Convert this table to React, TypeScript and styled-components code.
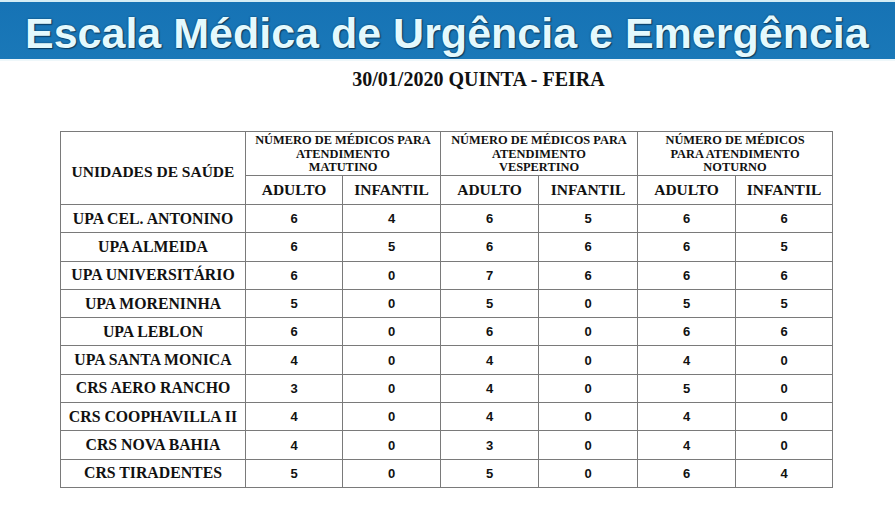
import React from 'react';
import styled, { createGlobalStyle } from 'styled-components';

type Row = { name: string; values: number[] };

const rows: Row[] = [
  { name: 'UPA CEL. ANTONINO', values: [6, 4, 6, 5, 6, 6] },
  { name: 'UPA ALMEIDA', values: [6, 5, 6, 6, 6, 5] },
  { name: 'UPA UNIVERSITÁRIO', values: [6, 0, 7, 6, 6, 6] },
  { name: 'UPA MORENINHA', values: [5, 0, 5, 0, 5, 5] },
  { name: 'UPA LEBLON', values: [6, 0, 6, 0, 6, 6] },
  { name: 'UPA SANTA MONICA', values: [4, 0, 4, 0, 4, 0] },
  { name: 'CRS AERO RANCHO', values: [3, 0, 4, 0, 5, 0] },
  { name: 'CRS COOPHAVILLA II', values: [4, 0, 4, 0, 4, 0] },
  { name: 'CRS NOVA BAHIA', values: [4, 0, 3, 0, 4, 0] },
  { name: 'CRS TIRADENTES', values: [5, 0, 5, 0, 6, 4] },
];

const groups = [
  ['NÚMERO DE MÉDICOS PARA', 'ATENDIMENTO', 'MATUTINO'],
  ['NÚMERO DE MÉDICOS PARA', 'ATENDIMENTO', 'VESPERTINO'],
  ['NÚMERO DE MÉDICOS', 'PARA ATENDIMENTO', 'NOTURNO'],
];

const colWidths = [185, 97, 98, 98, 99, 98, 97];

const App = () => {
  return (
    <Page>
      <GlobalStyle />
      <Banner>
        <Title>Escala Médica de Urgência e Emergência</Title>
      </Banner>
      <DateLine>30/01/2020 QUINTA - FEIRA</DateLine>
      <Schedule>
        <colgroup>
          {colWidths.map((w, i) => (
            <col key={i} style={{ width: w }} />
          ))}
        </colgroup>
        <thead>
          <GroupRow>
            <UnitHead rowSpan={2}>UNIDADES DE SAÚDE</UnitHead>
            {groups.map((lines, i) => (
              <GroupHead key={i} colSpan={2}>
                {lines.map((l, j) => (
                  <div key={j}>{l}</div>
                ))}
              </GroupHead>
            ))}
          </GroupRow>
          <SubRow>
            {groups.map((_, i) => (
              <React.Fragment key={i}>
                <SubHead>ADULTO</SubHead>
                <SubHead>INFANTIL</SubHead>
              </React.Fragment>
            ))}
          </SubRow>
        </thead>
        <tbody>
          {rows.map((r) => (
            <DataRow key={r.name}>
              <UnitName>{r.name}</UnitName>
              {r.values.map((v, i) => (
                <Count key={i}>{v}</Count>
              ))}
            </DataRow>
          ))}
        </tbody>
      </Schedule>
    </Page>
  );
};

export default App;

const GlobalStyle = createGlobalStyle`
  html, body {
    margin: 0;
    padding: 0;
    background: #ffffff;
  }
`;

const Page = styled.div`
  width: 895px;
  height: 507px;
  overflow: hidden;
  background: #ffffff;
`;

const Banner = styled.header`
  height: 57px;
  border-top: 2px solid #d4edf5;
  border-bottom: 2px solid #eef7fa;
  background: linear-gradient(#1673b5, #1a78b8);
  display: flex;
  align-items: center;
  padding-left: 25px;
`;

const Title = styled.h1`
  margin: 0;
  font-family: 'Liberation Sans', Arial, sans-serif;
  font-weight: 700;
  font-size: 43px;
  line-height: 1;
  color: #e4f9fd;
  white-space: nowrap;
  text-shadow: 0 0 2px #0c3b5e, 1px 1px 1px #0c3b5e;
  margin-top: 5px;
`;

const DateLine = styled.div`
  display: flex;
  justify-content: center;
  padding-left: 62px;
  margin-top: 7px;
  font-family: 'Liberation Serif', 'Times New Roman', serif;
  font-weight: 700;
  font-size: 20px;
  line-height: 22px;
  color: #111;
`;

const Schedule = styled.table`
  margin: 41px 0 0 60px;
  width: 772px;
  table-layout: fixed;
  border-collapse: collapse;
  border: 1px solid #7a7a7a;
  color: #111;

  td, th {
    border: 1px solid #7a7a7a;
    padding: 0;
    text-align: center;
    vertical-align: middle;
  }
`;

const GroupRow = styled.tr`
  height: 44px;
`;

const SubRow = styled.tr`
  height: 29px;
`;

const DataRow = styled.tr`
  height: 28.3px;
`;

const UnitHead = styled.th`
  font-family: 'Liberation Serif', 'Times New Roman', serif;
  font-weight: 700;
  font-size: 15.5px;
  padding-top: 8px !important;
`;

const GroupHead = styled.th`
  font-family: 'Liberation Serif', 'Times New Roman', serif;
  font-weight: 700;
  font-size: 12.4px;
  line-height: 13.5px;
  padding-top: 2px !important;
`;

const SubHead = styled.th`
  font-family: 'Liberation Serif', 'Times New Roman', serif;
  font-weight: 700;
  font-size: 15.5px;
`;

const UnitName = styled.td`
  font-family: 'Liberation Serif', 'Times New Roman', serif;
  font-weight: 700;
  font-size: 15.8px;
  white-space: nowrap;
`;

const Count = styled.td`
  font-family: 'Liberation Sans', Arial, sans-serif;
  font-weight: 700;
  font-size: 13px;
`;
